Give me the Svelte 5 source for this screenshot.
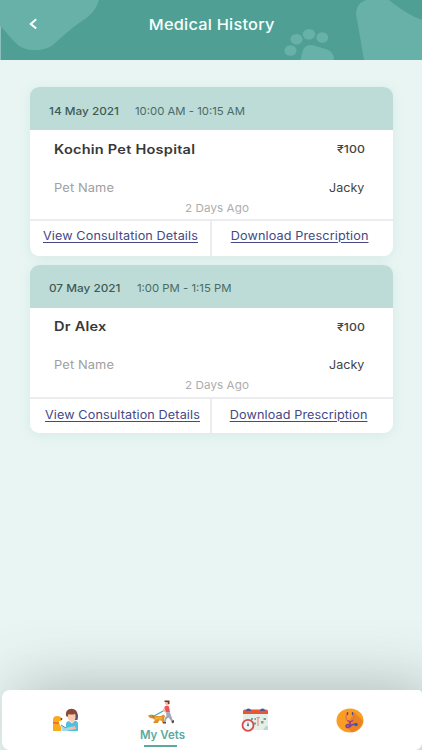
<script lang="ts">
	type Visit = {
		date: string;
		time: string;
		provider: string;
		fee: string;
		pet: string;
		ago: string;
	};

	const visits: Visit[] = [
		{
			date: '14 May 2021',
			time: '10:00 AM - 10:15 AM',
			provider: 'Kochin Pet Hospital',
			fee: '₹100',
			pet: 'Jacky',
			ago: '2 Days Ago'
		},
		{
			date: '07 May 2021',
			time: '1:00 PM - 1:15 PM',
			provider: 'Dr Alex',
			fee: '₹100',
			pet: 'Jacky',
			ago: '2 Days Ago'
		}
	];

	const tabs = ['Consult', 'My Vets', 'Calendar', 'Care'];
	let active = $state('My Vets');
</script>

<div class="screen">
	<header>
		<svg class="backdrop" viewBox="0 0 422 60" aria-hidden="true">
			<g fill="#68b1a9">
				<path d="M0 0H99C96 10 90 16 82 21C70 29 62 37 54 44C45 52 25 52 17 44C10 38 6 31 0 26Z" />
				<path d="M364 60L357 19C354 8 360 0 369 0H389C400 9 411 16 422 20V60Z" />
				<ellipse cx="290.500" cy="50.500" rx="6" ry="5.300" />
				<ellipse cx="296.500" cy="39.300" rx="6" ry="5.300" />
				<ellipse cx="309" cy="34.200" rx="6.200" ry="5.300" />
				<ellipse cx="322.300" cy="37.600" rx="5.900" ry="5.300" />
				<path d="M300.500 60L303 50Q306 43.500 314 45.500L327 49.500Q334 52 334 60Z" />
			</g>
		</svg>
		<button class="back" aria-label="Back">
			<svg width="9" height="12" viewBox="0 0 9 12">
				<path d="M7.200 1.300L1.800 5.900L7.200 10.500" fill="none" stroke="#fff" stroke-width="2" />
			</svg>
		</button>
		<h1>Medical History</h1>
	</header>

	<main>
		{#each visits as visit (visit.date)}
			<article>
				<div class="when">
					<span class="date">{visit.date}</span>
					<span class="time">{visit.time}</span>
				</div>
				<div class="details">
					<div class="line">
						<h2>{visit.provider}</h2>
						<span class="fee">{visit.fee}</span>
					</div>
					<div class="line pet">
						<span class="label">Pet Name</span>
						<span class="name">{visit.pet}</span>
					</div>
					<p class="ago">{visit.ago}</p>
				</div>
				<div class="actions">
					<a href="#details"><span>View Consultation Details</span></a>
					<a href="#prescription"><span>Download Prescription</span></a>
				</div>
			</article>
		{/each}
	</main>

	<nav>
		{#each tabs as tab (tab)}
			<button class="tab" class:active={active === tab} aria-label={tab} onclick={() => (active = tab)}>
				{#if tab === 'Consult'}
					<svg width="27" height="24" viewBox="0 0 27 24">
						<path d="M1 23V12Q1 8 5 8Q9 8 10 11L9 13H7V15L9 19V23Z" fill="#f9ab20" />
						<path d="M1 14L7 14.500V16L1 15.500Z" fill="#ed6535" />
						<circle cx="9.500" cy="11" r=".9" fill="#70462a" />
						<path d="M14 8Q13 1 19.500 .800Q25.500 1 25.500 7V12H22Z" fill="#8b4938" />
						<path d="M15.500 6Q19 6 22 4.500L23.500 7V10Q23 13.500 19.500 13.500Q15 13 15.500 6Z" fill="#fbc8ad" />
						<path d="M15.500 9Q14 5 16 3.500L22 3L23 6Q19 7 16.500 6Z" fill="#8b4938" />
						<path d="M24.500 6Q26 8 24.500 11" fill="none" stroke="#485b85" stroke-width="1.500" />
						<path d="M14 16Q14 13.500 17 13L20 15.500L23 12.500Q26 13 26 16V23H14Z" fill="#52bfdc" />
						<path d="M18 12L20 15.500L22 12Z" fill="#fbc8ad" />
						<path d="M9 18L14 20L20 18.500L22 20L15 23H10Z" fill="#a4d9e9" />
						<path d="M9 17L14 20" stroke="#4f86c0" />
						<path d="M17 20L23 18L24 21L18 22Z" fill="#f8bca2" />
					</svg>
				{:else if tab === 'My Vets'}
					<svg width="27" height="24" viewBox="0 0 27 24">
						<path d="M5 16.500L16 10.500" stroke="#45a8ba" stroke-width="1.200" />
						<path d="M1 15L4 14.500L6 16H13L15.500 14.500L17 16L16 19L17 23H14.500L13.500 20.500L11 20.500L10 23H5L7 20L5 18.500L2 18L0 16Z" fill="#df8f28" />
						<path d="M6 17L7 20L10 19.500L13 20L15 17.500L12 16.500Z" fill="#f1aa35" />
						<path d="M4.500 15L6 18" stroke="#3998ac" stroke-width="1.300" />
						<path d="M17 1.500H21V5L19 5.500L17 4Z" fill="#f9bb9b" />
						<path d="M16.500 .500H21.500V4H20L19.500 2H16.500Z" fill="#673b31" />
						<path d="M16.500 6.500Q19 5 21 6.500L22 12.500H17.500Z" fill="#ec5061" />
						<path d="M17 7.500L15.500 10.500L18 11.500" fill="none" stroke="#f6ae91" stroke-width="1.300" />
						<path d="M18 12.500H22L23.500 17L25 20.500L23.500 21.500L20.500 17.500L18.500 19L17.500 22.500L16 22L16.800 18L18.500 16Z" fill="#9cabb7" />
						<path d="M23.500 21L26 20V22.500L24 23.500ZM15 22H18V23.500H15Z" fill="#62473e" />
					</svg>
				{:else if tab === 'Calendar'}
					<svg width="28" height="25" viewBox="0 0 28 25">
						<path d="M2 5H27V22H2Z" fill="#e4efea" />
						<path d="M25 18H27V22H22Z" fill="#b9d9d2" />
						<path d="M2 3Q2 1.500 4 1.500H25Q27 1.500 27 3V6H2Z" fill="#e95632" />
						<path d="M5 3Q5 .500 7.500 .500Q10 .500 10 3ZM19 3Q19 .500 21.500 .500Q24 .500 24 3Z" fill="#525793" />
						<path d="M10 10H12V12H10ZM13.500 10H15V12H13.500ZM20 13H22.500V15.500H20ZM22.500 10H25V12H22.500ZM13 14.500H15V16.500H13Z" fill="#75a197" />
						<path d="M17 9V18M15.500 9.500H19" fill="none" stroke="#ed9275" stroke-width="1.200" />
						<circle cx="7" cy="17.300" r="5.500" fill="#eef7f6" stroke="#dc4949" stroke-width="1.800" />
						<path d="M7 14.500V18" fill="none" stroke="#557e8e" />
						<circle cx="7" cy="17.300" r="1" fill="#4a6e88" />
					</svg>
				{:else}
					<svg width="28" height="25" viewBox="0 0 28 25">
						<ellipse cx="14" cy="12.500" rx="13.500" ry="12" fill="#fa9d24" />
						<path d="M18 4L27 13Q25 22 16 24.300L10 19Z" fill="#e98325" />
						<path d="M11 5L10 9Q10 13 14 13.500Q18 13 18 9L17 5" fill="none" stroke="#e87147" stroke-width="1.400" />
						<path d="M11.500 4V7M16.500 4V7" stroke="#51566c" stroke-width="1.300" />
						<path d="M14 14V17Q10 16 10 18Q10.500 20.500 14 18.500Q16 15.500 20 16.500" fill="none" stroke="#833f97" stroke-width="1.600" />
						<path d="M11.500 12.500L14 14L17 12.500" fill="none" stroke="#9a4190" stroke-width="1.300" />
						<circle cx="20" cy="16.500" r="1.800" fill="#355eb0" />
					</svg>
				{/if}
				{#if active === tab}
					<span>{tab}</span>
				{/if}
			</button>
		{/each}
	</nav>
</div>

<style>
	:global(body) {
		margin: 0;
	}
	.screen {
		display: flex;
		flex-direction: column;
		height: 750px;
		overflow: hidden;
		background: #e8f5f3;
		font-family: Inter, 'Noto Sans', sans-serif;
		color: #444;
	}
	header {
		position: relative;
		display: flex;
		align-items: center;
		justify-content: center;
		box-sizing: border-box;
		flex: none;
		height: 59.5px;
		padding: 0 0 11px;
		background: #509f95;
		border-left: 1px solid #8bc1ba;
	}
	.backdrop {
		position: absolute;
		top: 0;
		left: -1px;
		width: 422px;
		height: 60px;
	}
	.back {
		position: absolute;
		top: 18px;
		left: 28px;
		display: flex;
		padding: 0;
		border: 0;
		background: none;
	}
	h1 {
		position: relative;
		margin: 0;
		color: #f5fffd;
		font-size: 15px;
		font-weight: 500;
		letter-spacing: 0.2px;
		transform: scaleX(1.09);
	}
	main {
		display: flex;
		flex: 1;
		flex-direction: column;
		gap: 9px;
		padding: 27.5px 29px 0 30px;
	}
	article {
		display: flex;
		flex-direction: column;
		height: 168.5px;
		overflow: hidden;
		border-radius: 9px;
		background: #fff;
		box-shadow: 0 2px 12px rgba(70, 150, 130, 0.1);
	}
	.when {
		display: flex;
		align-items: center;
		box-sizing: border-box;
		flex: none;
		gap: 17px;
		height: 43px;
		padding: 4px 19px 0;
		background: #bddcd7;
		font-size: 11px;
	}
	.date {
		color: #3d5b56;
		font-weight: 500;
		transform: scaleX(1.07);
		transform-origin: left;
	}
	.time {
		margin-left: 4px;
		color: #4b6b66;
		transform: scaleX(1.03);
		transform-origin: left;
	}
	.details {
		box-sizing: border-box;
		flex: none;
		height: 89px;
		padding: 10px 28px 0 24px;
	}
	.line {
		display: flex;
		align-items: center;
		justify-content: space-between;
		height: 18px;
	}
	.pet {
		margin-top: 20.5px;
		font-size: 11.5px;
	}
	h2 {
		margin: 0;
		color: #383838;
		font-size: 12.5px;
		font-weight: 600;
		letter-spacing: 0.2px;
		transform: scaleX(1.163);
		transform-origin: left;
	}
	.fee {
		font-size: 11px;
		font-weight: 500;
		transform: scaleX(1.12);
		transform-origin: right;
	}
	.label {
		color: #a0a0a0;
		letter-spacing: 0.1px;
		transform: scaleX(1.12);
		transform-origin: left;
	}
	.name {
		margin-right: 1px;
		transform: scaleX(1.09);
		transform-origin: right;
	}
	.ago {
		margin: 4px 0 0 15px;
		color: #adadad;
		font-size: 11px;
		line-height: 15px;
		letter-spacing: 0.05px;
		text-align: center;
		transform: scaleX(1.06);
	}
	.actions {
		display: grid;
		grid-template-columns: 180px 1fr;
		flex: 1;
		border-top: 2px solid #ececee;
	}
	.actions a {
		display: flex;
		justify-content: center;
		padding-top: 7.5px;
		color: #444885;
		font-size: 11.5px;
		line-height: 15px;
		letter-spacing: 0.1px;
		text-decoration: underline;
		text-underline-offset: 1.5px;
	}
	.actions span {
		transform: scaleX(1.1);
	}
	.actions a:first-child {
		padding-left: 1px;
	}
	.actions a + a {
		padding-right: 5px;
		border-left: 2px solid #ececee;
	}
	article:nth-child(2) .actions a {
		padding-top: 9px;
	}
	article:nth-child(2) .actions a:first-child {
		padding-left: 5px;
	}
	article:nth-child(2) .actions a + a {
		padding-right: 7px;
	}
	nav {
		display: grid;
		grid-template-columns: repeat(4, 95px);
		box-sizing: border-box;
		flex: none;
		height: 60px;
		margin-left: 2px;
		padding-left: 15.5px;
		border-radius: 8px 4px 7px 8px;
		background: #fff;
		box-shadow: 14px 0 65px rgba(70, 80, 75, 0.42);
	}
	.tab {
		display: flex;
		align-items: center;
		flex-direction: column;
		padding: 18px 0 0;
		border: 0;
		background: none;
		font-family: inherit;
	}
	.tab.active {
		padding: 10px 0 0 2px;
	}
	.tab svg {
		flex: none;
	}
	.tab span {
		margin: 2px 0 0 3px;
		padding-bottom: 2px;
		color: #5ba99f;
		font-size: 11.5px;
		font-weight: 600;
		line-height: 19px;
		background: linear-gradient(#5ba99f, #5ba99f) 4px bottom / 33px 2px no-repeat;
	}
</style>
